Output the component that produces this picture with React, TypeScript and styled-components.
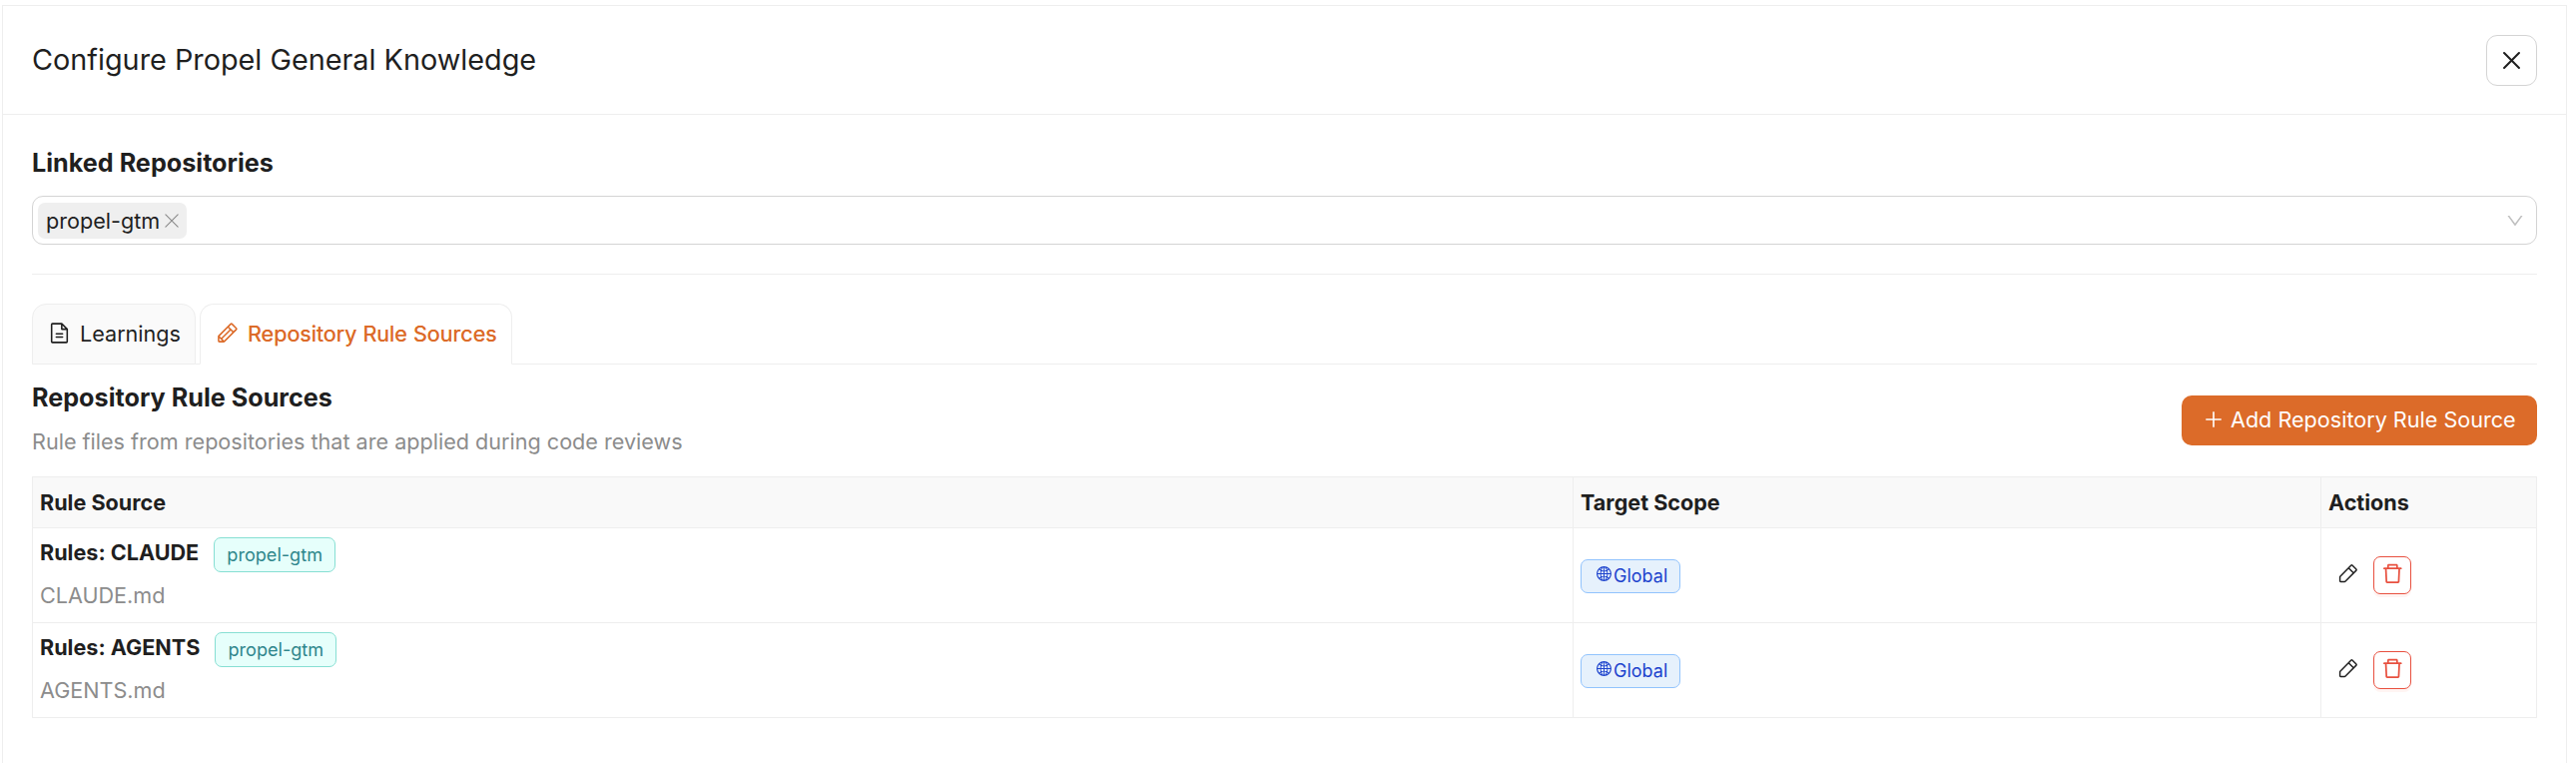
import React from "react";
import styled, { createGlobalStyle } from "styled-components";
import { AiOutlineDelete, AiOutlineDown, AiOutlineGlobal, AiOutlinePlus } from "react-icons/ai";
import { PiFileText, PiPencil, PiPencilSimple } from "react-icons/pi";

const GlobalStyle = createGlobalStyle`
  *, *::before, *::after { box-sizing: border-box; }
  html, body { margin: 0; background: #fff; }
  body {
    font-family: Inter, "Liberation Sans", sans-serif;
    font-size: 21.6px;
    line-height: 34px;
    color: #1f1f1f;
  }
  button { font: inherit; color: inherit; margin: 0; padding: 0; }
  svg { display: block; flex: none; }
`;

const Page = styled.div`
  height: 764px;
  padding: 5px 9px 0 2px;
`;

const Panel = styled.main`
  height: 100%;
  border: 1px solid #eee;
  border-bottom: 0;
`;

const PanelHeader = styled.header`
  display: flex;
  align-items: center;
  justify-content: space-between;
  height: 109px;
  padding: 0 29px;
  border-bottom: 1px solid #eee;
`;

const Title = styled.h1`
  margin: 0;
  font-size: 28.8px;
  line-height: 40px;
  font-weight: 400;
`;

const CloseButton = styled.button`
  display: flex;
  align-items: center;
  justify-content: center;
  width: 51px;
  height: 51px;
  border: 1px solid #d4d4d4;
  border-radius: 11px;
  background: #fff;
`;

const PanelBody = styled.div`
  padding: 30px 29px 0;
`;

const Heading = styled.h2`
  margin: 0;
  font-size: 25.2px;
  line-height: 36px;
  font-weight: 700;
`;

const RepoSelect = styled.div`
  display: flex;
  align-items: center;
  justify-content: space-between;
  height: 49px;
  margin-top: 15px;
  padding: 0 11px 0 5px;
  border: 1px solid #d4d4d4;
  border-radius: 11px;
  color: #bfbfbf;
`;

const SelectedRepo = styled.span`
  display: flex;
  align-items: center;
  gap: 5px;
  width: 149px;
  height: 36px;
  padding-left: 8px;
  border-radius: 7px;
  background: #efefef;
  color: #1f1f1f;
  svg { color: #8a8a8a; }
`;

const Divider = styled.hr`
  height: 1px;
  margin: 29px 0;
  border: 0;
  background: #eee;
`;

const TabList = styled.div`
  display: flex;
  gap: 4px;
  height: 61px;
  border-bottom: 1px solid #eee;
`;

const Tab = styled.button<{ $active?: boolean; $width: number }>`
  display: flex;
  align-items: center;
  gap: 8px;
  width: ${(p) => p.$width}px;
  height: 61px;
  padding: 0 0 2px 14px;
  border: 1px solid #eee;
  border-bottom-color: ${(p) => (p.$active ? "#fff" : "#eee")};
  border-radius: 14px 14px 0 0;
  background: ${(p) => (p.$active ? "#fff" : "#fafafa")};
  color: ${(p) => (p.$active ? "#dc6b29" : "#1f1f1f")};
  text-shadow: ${(p) => (p.$active ? "0 0 0.4px currentcolor" : "none")};
  white-space: nowrap;
`;

const SectionHeader = styled.section`
  display: flex;
  justify-content: space-between;
  height: 112px;
  padding-top: 15px;
`;

const Subtitle = styled.p`
  margin: 9px 0 0;
  color: #8c8c8c;
`;

const AddButton = styled.button`
  display: flex;
  align-items: center;
  gap: 6px;
  width: 356px;
  height: 50px;
  margin-top: 16px;
  padding: 0 0 2px 21px;
  border: 0;
  border-radius: 10px;
  background: #dc6b29;
  color: #fff;
  white-space: nowrap;
`;

const Table = styled.div`
  border: 1px solid #eee;
  border-bottom: 0;
`;

const Row = styled.div<{ $head?: boolean }>`
  display: grid;
  grid-template-columns: 1542px 749px 1fr;
  height: ${(p) => (p.$head ? 51 : 95)}px;
  border-bottom: 1px solid #eee;
  background: ${(p) => (p.$head ? "#f9f9f9" : "#fff")};
  font-weight: ${(p) => (p.$head ? 700 : 400)};
`;

const Cell = styled.div`
  display: flex;
  align-items: center;
  padding: 0 7px;
  & + & { border-left: 1px solid #eee; }
`;

const SourceCell = styled(Cell)`
  flex-direction: column;
  align-items: flex-start;
  padding-top: 5px;
`;

const RuleName = styled.div`
  display: flex;
  align-items: center;
  gap: 15px;
  height: 38px;
  font-weight: 700;
`;

const FileName = styled.div`
  margin-top: 7px;
  color: #8c8c8c;
`;

const RepoTag = styled.span`
  display: flex;
  align-items: center;
  justify-content: center;
  width: 122px;
  height: 35px;
  margin-top: 4px;
  padding-bottom: 1px;
  border: 1px solid #87dfd3;
  border-radius: 7px;
  background: #e6fffb;
  color: #2f868b;
  font-size: 18.1px;
  font-weight: 400;
`;

const ScopeTag = styled.span`
  display: flex;
  align-items: center;
  gap: 1px;
  width: 100px;
  height: 34px;
  padding: 0 0 1px 14px;
  margin-top: 2px;
  border: 1px solid #91c3fd;
  border-radius: 7px;
  background: #e6f1fc;
  color: #1d43cd;
  font-size: 18px;
  svg { margin-bottom: 5px; }
`;

const EditButton = styled.button`
  display: flex;
  align-items: center;
  justify-content: center;
  width: 38px;
  height: 38px;
  padding-bottom: 3px;
  border: 0;
  background: none;
`;

const DeleteButton = styled(EditButton)`
  margin-left: 7px;
  border: 1px solid #e8503f;
  border-radius: 7px;
  color: #e8503f;
  background: #fff;
  box-shadow: 0 3px 0 rgba(255, 38, 5, 0.05);
`;

function CrossIcon({ size, stroke }: { size: number; stroke: number }) {
  return (
    <svg width={size} height={size} viewBox="0 0 16 16" fill="none" stroke="currentColor" strokeWidth={stroke} strokeLinecap="round">
      <path d="M1 1 15 15M15 1 1 15" />
    </svg>
  );
}

const rules = [
  { name: "CLAUDE", repo: "propel-gtm", file: "CLAUDE.md", scope: "Global" },
  { name: "AGENTS", repo: "propel-gtm", file: "AGENTS.md", scope: "Global" },
];

export default function App() {
  return (
    <Page>
      <GlobalStyle />
      <Panel>
        <PanelHeader>
          <Title>Configure Propel General Knowledge</Title>
          <CloseButton aria-label="Close">
            <CrossIcon size={17} stroke={1.9} />
          </CloseButton>
        </PanelHeader>
        <PanelBody>
          <Heading>Linked Repositories</Heading>
          <RepoSelect>
            <SelectedRepo>
              propel-gtm
              <CrossIcon size={14} stroke={1.3} />
            </SelectedRepo>
            <AiOutlineDown size={20} />
          </RepoSelect>
          <Divider />
          <TabList>
            <Tab $width={164}>
              <PiFileText size={25} />
              Learnings
            </Tab>
            <Tab $active $width={313}>
              <PiPencil size={25} />
              Repository Rule Sources
            </Tab>
          </TabList>
          <SectionHeader>
            <div>
              <Heading>Repository Rule Sources</Heading>
              <Subtitle>Rule files from repositories that are applied during code reviews</Subtitle>
            </div>
            <AddButton>
              <AiOutlinePlus size={22} />
              Add Repository Rule Source
            </AddButton>
          </SectionHeader>
          <Table>
            <Row $head>
              <Cell>Rule Source</Cell>
              <Cell>Target Scope</Cell>
              <Cell>Actions</Cell>
            </Row>
            {rules.map((rule) => (
              <Row key={rule.name}>
                <SourceCell>
                  <RuleName>
                    Rules: {rule.name}
                    <RepoTag>{rule.repo}</RepoTag>
                  </RuleName>
                  <FileName>{rule.file}</FileName>
                </SourceCell>
                <Cell>
                  <ScopeTag>
                    <AiOutlineGlobal size={17} />
                    {rule.scope}
                  </ScopeTag>
                </Cell>
                <Cell>
                  <EditButton aria-label="Edit">
                    <PiPencilSimple size={23} />
                  </EditButton>
                  <DeleteButton aria-label="Delete">
                    <AiOutlineDelete size={24.6} />
                  </DeleteButton>
                </Cell>
              </Row>
            ))}
          </Table>
        </PanelBody>
      </Panel>
    </Page>
  );
}
